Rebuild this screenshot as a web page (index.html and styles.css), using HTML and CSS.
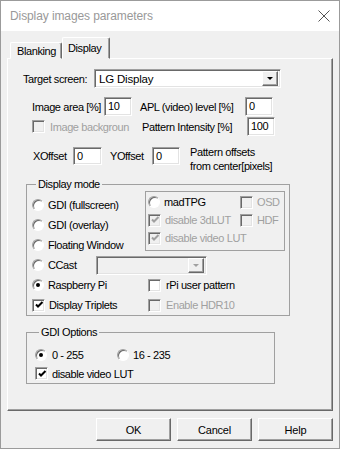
FILE: index.html
```html
<!DOCTYPE html>
<html lang="en">
<head>
    <meta charset="UTF-8">
    <title>Display images parameters</title>
    <link rel="stylesheet" href="styles.css">
</head>
<body>
    <div class="window">
        <div class="titlebar">
            <span class="title">Display images parameters</span>
            <svg class="close" width="12" height="12" viewBox="0 0 12 12">
                <path d="M0.5 0.5L11.5 11.5M11.5 0.5L0.5 11.5" stroke="#555" stroke-width="1" fill="none"/>
            </svg>
        </div>

        <div class="tabs">
            <div class="tab">Blanking</div>
            <div class="tab tab-active">Display</div>
        </div>

        <div class="panel">
            <div class="row row-target">
                <span class="lbl w-target">Target screen:</span>
                <div class="combo combo-target">
                    <span class="combo-text">LG Display</span>
                    <span class="combo-btn"><span class="arrow"></span></span>
                </div>
            </div>

            <div class="row row-area">
                <span class="lbl w-area">Image area [%]</span>
                <span class="edit">10</span>
                <span class="lbl w-apl">APL (video) level [%]</span>
                <span class="edit">0</span>
            </div>

            <div class="row row-intensity">
                <span class="cell-bg">
                    <span class="cb dis"></span>
                    <span class="txt dim">Image backgroun</span>
                </span>
                <span class="lbl w-apl">Pattern Intensity [%]</span>
                <span class="edit">100</span>
            </div>

            <div class="row row-offset">
                <span class="lbl w-xoff">XOffset</span>
                <span class="edit w-xedit">0</span>
                <span class="lbl w-yoff">YOffset</span>
                <span class="edit">0</span>
                <span class="note">Pattern offsets<br>from center[pixels]</span>
            </div>

            <fieldset class="group group-mode">
                <legend>Display mode</legend>
                <div class="mode-top">
                    <div class="mode-left">
                        <div class="opt"><span class="rb"></span><span class="txt clip-gdi">GDI (fullscreen)</span></div>
                        <div class="opt"><span class="rb"></span><span class="txt">GDI (overlay)</span></div>
                        <div class="opt"><span class="rb"></span><span class="txt">Floating Window</span></div>
                    </div>
                    <div class="madbox">
                        <div class="opt opt-mad">
                            <span class="cell-mad"><span class="rb"></span><span class="txt">madTPG</span></span>
                            <span class="cb dis"></span><span class="txt dim">OSD</span>
                        </div>
                        <div class="opt opt-mad">
                            <span class="cell-mad">
                                <span class="cb dis on"><svg width="9" height="9" viewBox="0 0 9 9"><path d="M1 3.5l2 2 4.5-4.5" /></svg></span>
                                <span class="txt dim">disable 3dLUT</span>
                            </span>
                            <span class="cb dis"></span><span class="txt dim">HDF</span>
                        </div>
                        <div class="opt opt-mad">
                            <span class="cb dis on"><svg width="9" height="9" viewBox="0 0 9 9"><path d="M1 3.5l2 2 4.5-4.5" /></svg></span>
                            <span class="txt dim">disable video LUT</span>
                        </div>
                    </div>
                </div>

                <div class="opt">
                    <span class="rb"></span><span class="txt w-ccast">CCast</span>
                    <div class="combo combo-dis">
                        <span class="combo-text"></span>
                        <span class="combo-btn"><span class="arrow"></span></span>
                    </div>
                </div>
                <div class="opt">
                    <span class="cell-left"><span class="rb on"></span><span class="txt">Raspberry Pi</span></span>
                    <span class="cb"></span><span class="txt txt-r">rPi user pattern</span>
                </div>
                <div class="opt">
                    <span class="cell-left">
                        <span class="cb on"><svg width="9" height="9" viewBox="0 0 9 9"><path d="M1 3.5l2 2 4.5-4.5" /></svg></span>
                        <span class="txt">Display Triplets</span>
                    </span>
                    <span class="cb dis"></span><span class="txt txt-r dim">Enable HDR10</span>
                </div>
            </fieldset>

            <fieldset class="group group-gdi">
                <legend>GDI Options</legend>
                <div class="opt opt-g">
                    <span class="cell-g"><span class="rb on"></span><span class="txt">0 - 255</span></span>
                    <span class="rb"></span><span class="txt">16 - 235</span>
                </div>
                <div class="opt opt-g">
                    <span class="cb on"><svg width="9" height="9" viewBox="0 0 9 9"><path d="M1 3.5l2 2 4.5-4.5" /></svg></span>
                    <span class="txt">disable video LUT</span>
                </div>
            </fieldset>
        </div>

        <div class="buttons">
            <button type="button" class="btn">OK</button>
            <button type="button" class="btn">Cancel</button>
            <button type="button" class="btn">Help</button>
        </div>
    </div>
</body>
</html>
```

FILE: styles.css
```css
body {
    margin: 0;
    font-family: "Liberation Sans", Arial, sans-serif;
    font-size: 11px;
    letter-spacing: -0.4px;
    color: #000;
}
.window {
    width: 340px;
    height: 449px;
    box-sizing: border-box;
    border: 1px solid #9b9b9b;
    background-color: #f0f0f0;
}
.titlebar {
    height: 30px;
    background-color: #fff;
    display: flex;
    align-items: center;
    justify-content: space-between;
    padding: 0 9px;
}
.title {
    font-size: 12px;
    letter-spacing: -0.1px;
    color: #999;
}

/* tabs */
.tabs {
    display: flex;
    align-items: flex-end;
    height: 22px;
    margin: 6px 0 -1px 9px;
}
.tab {
    box-sizing: border-box;
    width: 52px;
    height: 17px;
    padding: 2px 0 0 6px;
    border: 1px solid;
    border-color: #fff #696969 #f0f0f0 #fff;
    border-radius: 2px 2px 0 0;
    box-shadow: inset -1px 0 #a0a0a0;
}
.tab-active {
    width: 48px;
    height: 22px;
    padding: 4px 0 0 5px;
    background-color: #f0f0f0;
    position: relative;
    z-index: 1;
}
.panel {
    box-sizing: border-box;
    width: 326px;
    height: 353px;
    margin-left: 6px;
    border: 1px solid;
    border-color: #fff #696969 #696969 #fff;
    box-shadow: inset -1px -1px #a0a0a0;
}

/* rows */
.row {
    display: flex;
    align-items: center;
}
.row-target {
    height: 19px;
    margin-top: 10px;
    padding-left: 15px;
}
.row-area {
    height: 19px;
    margin-top: 9px;
    padding-left: 24px;
}
.row-intensity {
    height: 19px;
    margin-top: 1px;
    padding-left: 24px;
}
.row-offset {
    height: 18px;
    margin-top: 11px;
    padding-left: 25px;
}
.lbl {
    white-space: nowrap;
}
.w-target { width: 71px; }
.w-area { width: 72px; }
.w-apl { width: 105px; margin-left: 8px; }
.w-xoff { width: 40px; }
.w-yoff { width: 42px; margin-left: 8px; }
.cell-bg {
    display: flex;
    align-items: center;
    width: 102px;
    overflow: hidden;
    white-space: nowrap;
}
.cell-bg .txt {
    margin-left: 5px;
}
.note {
    margin: 6px 0 0 10px;
    line-height: 14px;
    white-space: nowrap;
}

/* edit boxes */
.edit {
    box-sizing: border-box;
    width: 28px;
    height: 19px;
    padding: 2px 0 0 3px;
    background-color: #fff;
    border: 1px solid;
    border-color: #a0a0a0 #fff #fff #a0a0a0;
    box-shadow: inset 1px 1px #696969, inset -1px -1px #e3e3e3;
}
.row-offset .edit {
    height: 18px;
}
.w-xedit { width: 29px; }

/* combo */
.combo {
    box-sizing: border-box;
    display: flex;
    align-items: center;
    height: 19px;
    padding: 2px;
    background-color: #fff;
    border: 1px solid;
    border-color: #a0a0a0 #fff #fff #a0a0a0;
    box-shadow: inset 1px 1px #696969, inset -1px -1px #e3e3e3;
}
.combo-target {
    width: 187px;
}
.combo-text {
    flex: 1;
    padding-left: 2px;
    font-size: 11.5px;
    letter-spacing: -0.2px;
}
.combo-btn {
    box-sizing: border-box;
    width: 16px;
    height: 15px;
    display: flex;
    align-items: center;
    justify-content: center;
    background-color: #f0f0f0;
    border: 1px solid;
    border-color: #fff #696969 #696969 #fff;
    box-shadow: inset -1px -1px #a0a0a0;
}
.arrow {
    width: 0;
    height: 0;
    border-left: 3px solid transparent;
    border-right: 3px solid transparent;
    border-top: 3px solid #000;
}
.combo-dis {
    width: 111px;
    height: 19px;
    background-color: #f0f0f0;
}
.combo-dis .arrow {
    border-top-color: #a0a0a0;
}

/* check boxes and radios */
.cb {
    box-sizing: border-box;
    flex: none;
    width: 13px;
    height: 13px;
    display: flex;
    align-items: center;
    justify-content: center;
    background-color: #fff;
    border: 1px solid;
    border-color: #a0a0a0 #fff #fff #a0a0a0;
    box-shadow: inset 1px 1px #696969, inset -1px -1px #e3e3e3;
}
.cb svg {
    margin: 1px 0 0 1px;
}
.cb path {
    fill: none;
    stroke: #000;
    stroke-width: 2;
}
.cb.dis {
    background-color: #f0f0f0;
}
.cb.dis path {
    stroke: #a0a0a0;
}
.rb {
    box-sizing: border-box;
    flex: none;
    width: 12px;
    height: 12px;
    display: flex;
    align-items: center;
    justify-content: center;
    background-color: #fff;
    border: 1px solid;
    border-radius: 50%;
    border-color: #a0a0a0 #fff #fff #a0a0a0;
    box-shadow: inset 1px 1px #696969;
}
.rb.on::after {
    content: "";
    width: 4px;
    height: 4px;
    border-radius: 50%;
    background-color: #000;
}
.txt {
    margin-left: 4px;
    white-space: nowrap;
}
.dim {
    color: #a0a0a0;
}

/* group boxes */
.group {
    box-sizing: border-box;
    margin: 0;
    padding: 0;
    border: 1px solid #a0a0a0;
    min-width: 0;
}
.group legend {
    padding: 0 2px;
    margin-left: 4px;
    line-height: 13px;
}
.group-mode {
    width: 264px;
    margin: 13px 0 0 18px;
    padding: 0 0 0 5px;
}
.mode-top {
    display: flex;
    align-items: flex-start;
}
.mode-left {
    width: 113px;
    padding-top: 4px;
}
.opt {
    display: flex;
    align-items: center;
    height: 20px;
}
.clip-gdi {
    width: 72px;
    overflow: hidden;
}
.w-ccast {
    width: 48px;
}
.madbox {
    box-sizing: border-box;
    width: 140px;
    height: 60px;
    padding: 1px 0 0 2px;
    border: 1px solid #a0a0a0;
}
.opt-mad {
    height: 18px;
}
.opt-mad .txt {
    margin-left: 4px;
}
.cell-mad {
    display: flex;
    align-items: center;
    width: 92px;
}
.cell-left {
    display: flex;
    align-items: center;
    width: 116px;
}
.txt-r {
    margin-left: 5px;
}
.group-gdi {
    width: 249px;
    margin: 10px 0 0 18px;
    padding: 6px 0 0 8px;
}
.opt-g {
    height: 19px;
}
.cell-g {
    display: flex;
    align-items: center;
    width: 82px;
}
.cell-g .txt {
    margin-left: 5px;
}

/* buttons */
.buttons {
    display: flex;
    justify-content: flex-end;
    gap: 6px;
    margin-top: 7px;
    padding-right: 6px;
}
.btn {
    box-sizing: border-box;
    width: 75px;
    height: 23px;
    padding: 0;
    font-family: "Liberation Sans", Arial, sans-serif;
    font-size: 11px;
    letter-spacing: -0.2px;
    color: #000;
    background-color: #f0f0f0;
    border: 1px solid;
    border-color: #fff #696969 #696969 #fff;
    box-shadow: inset -1px -1px #a0a0a0;
}
```
